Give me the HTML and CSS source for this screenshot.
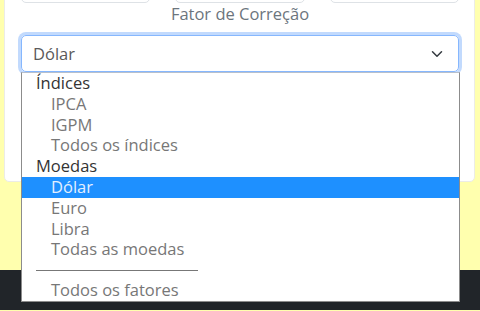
FILE: index.html
```html
<!DOCTYPE html>
<html lang="pt-BR">
<head>
<meta charset="utf-8">
<link rel="stylesheet" href="styles.css">
</head>
<body>
<div class="page">
  <div class="card">
    <div class="inputs">
      <div class="input"></div>
      <div class="input"></div>
      <div class="input"></div>
    </div>
    <div class="label">Fator de Correção</div>
    <div class="select">
      <span class="select-value">Dólar</span>
      <svg class="chevron" viewBox="0 0 16 16" width="12" height="12"><path d="M2 5l6 6 6-6" fill="none" stroke="#343a40" stroke-width="2" stroke-linecap="round" stroke-linejoin="round"/></svg>
    </div>
    <div class="popup">
      <div class="row group">Índices</div>
      <div class="row opt">IPCA</div>
      <div class="row opt">IGPM</div>
      <div class="row opt">Todos os índices</div>
      <div class="row group">Moedas</div>
      <div class="row opt selected">Dólar</div>
      <div class="row opt">Euro</div>
      <div class="row opt">Libra</div>
      <div class="row opt">Todas as moedas</div>
      <div class="row sep"><span class="sep-line"></span></div>
      <div class="row opt">Todos os fatores</div>
    </div>
  </div>
  <div class="spacer"></div>
  <footer class="footer"></footer>
</div>
</body>
</html>
```
FILE: styles.css
```css
html, body {
  margin: 0;
  padding: 0;
}
body {
  background: #ffffae;
  font-family: "Open Sans", "Noto Sans", sans-serif;
  width: 480px;
  height: 311px;
  overflow: hidden;
}
.page {
  display: flex;
  flex-direction: column;
}
.card {
  position: relative;
  margin: -40px 5px 0 4px;
  background: #fff;
  border: 1px solid #ecece6;
  border-radius: 5px;
  height: 222px;
  padding: 0 15px 0 16px;
  box-sizing: border-box;
}
.inputs {
  display: grid;
  grid-template-columns: repeat(3, 1fr);
  gap: 25px;
  margin-top: 4px;
}
.input {
  height: 38px;
  border: 1px solid #dee2e6;
  border-radius: 5px;
  box-sizing: border-box;
}
.label {
  text-align: center;
  color: #6c757d;
  font-size: 16.5px;
  line-height: 22px;
  margin-top: 0;
}
.select {
  margin-top: 10px;
  height: 37px;
  border: 1px solid #86b7fe;
  border-radius: 5px;
  box-shadow: 0 0 0 3px #c2dafd;
  display: flex;
  align-items: center;
  justify-content: space-between;
  padding: 0 15px 0 11px;
  box-sizing: border-box;
}
.select-value {
  color: #5a5a5a;
  font-size: 16.5px;
}
.chevron {
  display: block;
}
.popup {
  position: absolute;
  left: 16px;
  top: 111px;
  width: 439px;
  height: 230px;
  box-sizing: border-box;
  background: #fff;
  border: 1px solid #8c8c8c;
  border-top-color: #b8c0cc;
  z-index: 5;
  display: flex;
  flex-direction: column;
}
.row {
  height: 20.8px;
  line-height: 20.8px;
  font-size: 16.5px;
  white-space: nowrap;
}
.group {
  color: #333;
  padding-left: 14px;
}
.opt {
  color: #777;
  padding-left: 29px;
}
.selected {
  background: #1e90ff;
  color: #e3efff;
}
.sep {
  display: flex;
  align-items: center;
  padding-left: 14px;
}
.sep-line {
  display: block;
  width: 162px;
  height: 1px;
  background: #777;
}
.spacer {
  height: 88px;
}
.footer {
  height: 40px;
  background: #212529;
}
```
